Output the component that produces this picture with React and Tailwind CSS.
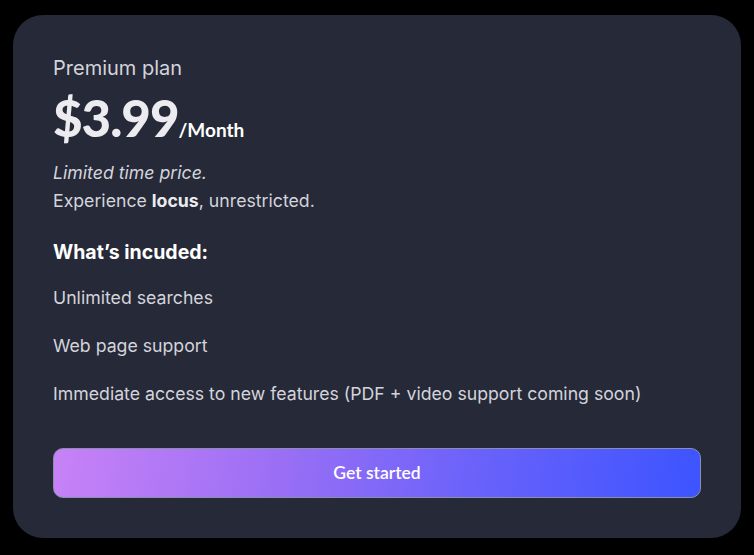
export default function App() {
  return (
    <div className="w-[754px] h-[555px] bg-black pt-[15px] pl-[13px]" style={{ fontFamily: "Inter, 'Noto Sans', sans-serif" }}>
      <div className="w-[728px] h-[523px] rounded-[30px] bg-[#262937] px-10 pt-[40px] pb-10 flex flex-col">
        <div className="text-[20px] leading-[24px] text-[#d4d4dc] mt-[1px]">Premium plan</div>
        <div className="flex items-baseline mt-[10px] text-[#ececf0]" style={{ fontFamily: "Lato, 'Open Sans', sans-serif" }}>
          <span className="text-[51px] leading-[56px] font-black tracking-[-1px]">$3.99</span>
          <span className="text-[19px] font-bold text-white">/Month</span>
        </div>
        <div className="mt-[13px] text-[17.7px] leading-[28px] text-[#d4d4dc]">
          <div className="italic">Limited time price.</div>
          <div>Experience <span className="font-bold text-[#ececf0]">locus</span>, unrestricted.</div>
        </div>
        <div className="mt-[23px] text-[19.5px] leading-[28px] font-bold text-white">What’s incuded:</div>
        <div className="mt-[20px] flex flex-col gap-[24px] text-[17.7px] leading-[24px] text-[#d4d4dc]">
          <div>Unlimited searches</div>
          <div>Web page support</div>
          <div>Immediate access to new features (PDF + video support coming soon)</div>
        </div>
        <button className="mt-auto h-[50px] w-full rounded-[10px] border border-[#8a8fb0] bg-[linear-gradient(100deg,#c882f6_0%,#9a6ff5_35%,#6a62fa_65%,#3c54ff_100%)] text-white text-[17.5px] font-semibold" style={{ fontFamily: "Lato, 'Open Sans', sans-serif" }}>
          Get started
        </button>
      </div>
    </div>
  );
}
